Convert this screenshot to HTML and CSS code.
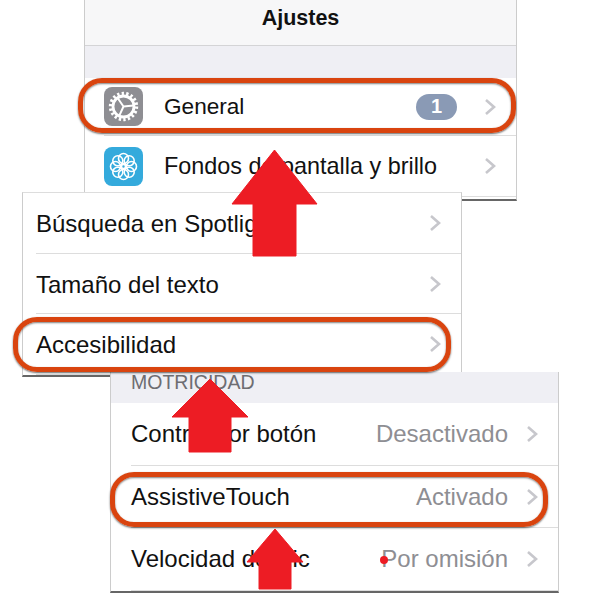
FILE: index.html
```html
<!DOCTYPE html>
<html lang="es">
<head>
    <meta charset="UTF-8">
    <title>Ajustes - AssistiveTouch</title>
    <link rel="stylesheet" href="styles.css">
</head>
<body>
    <div class="canvas">
        <!-- first screenshot -->
        <section class="panel panel-settings">
            <h1 class="navbar">Ajustes</h1>
            <div class="spacer"></div>
            <div class="row row-general">
                <svg class="app-icon icon-general" viewBox="0 0 39 39">
                    <circle class="teeth" cx="19.5" cy="19.5" r="13"/>
                    <circle class="ring" cx="19.5" cy="19.5" r="10.5"/>
                    <path class="spokes" d="M19.500 19.500L29.500 18.600M19.500 19.500L13.800 11.300M19.500 19.500L15.300 28.600"/>
                </svg>
                <span class="label label-general">General</span>
                <span class="badge">1</span>
                <svg class="chevron" viewBox="0 0 12 18"><path d="M2 2l8 7-8 7"/></svg>
            </div>
            <div class="row row-wallpaper">
                <svg class="app-icon icon-wallpaper" viewBox="0 0 39 39">
                    <g class="petals">
                        <circle cx="19.5" cy="11.5" r="5"/>
                        <circle cx="25.2" cy="13.8" r="5"/>
                        <circle cx="27.5" cy="19.5" r="5"/>
                        <circle cx="25.2" cy="25.2" r="5"/>
                        <circle cx="19.5" cy="27.5" r="5"/>
                        <circle cx="13.8" cy="25.2" r="5"/>
                        <circle cx="11.5" cy="19.5" r="5"/>
                        <circle cx="13.8" cy="13.8" r="5"/>
                        <circle cx="19.5" cy="19.500" r="2"/>
                    </g>
                </svg>
                <span class="label">Fondos de pantalla y brillo</span>
                <svg class="chevron" viewBox="0 0 12 18"><path d="M2 2l8 7-8 7"/></svg>
            </div>
        </section>

        <!-- second screenshot -->
        <section class="panel panel-general">
            <div class="row">
                <span class="label">Búsqueda en Spotlight</span>
                <svg class="chevron" viewBox="0 0 12 18"><path d="M2 2l8 7-8 7"/></svg>
            </div>
            <div class="row">
                <span class="label">Tamaño del texto</span>
                <svg class="chevron" viewBox="0 0 12 18"><path d="M2 2l8 7-8 7"/></svg>
            </div>
            <div class="row">
                <span class="label">Accesibilidad</span>
                <svg class="chevron" viewBox="0 0 12 18"><path d="M2 2l8 7-8 7"/></svg>
            </div>
        </section>

        <!-- third screenshot -->
        <section class="panel panel-access">
            <h2 class="group-title">MOTRICIDAD</h2>
            <div class="row">
                <span class="label">Control por botón</span>
                <span class="value">Desactivado</span>
                <svg class="chevron" viewBox="0 0 12 18"><path d="M2 2l8 7-8 7"/></svg>
            </div>
            <div class="row">
                <span class="label">AssistiveTouch</span>
                <span class="value">Activado</span>
                <svg class="chevron" viewBox="0 0 12 18"><path d="M2 2l8 7-8 7"/></svg>
            </div>
            <div class="row">
                <span class="label">Velocidad de clic</span>
                <span class="value">Por omisión</span>
                <svg class="chevron" viewBox="0 0 12 18"><path d="M2 2l8 7-8 7"/></svg>
            </div>
        </section>

        <!-- annotations drawn on top -->
        <div class="oval oval-general"></div>
        <div class="oval oval-access"></div>
        <div class="oval oval-touch"></div>

        <svg class="arrow arrow-one" viewBox="0 0 87 108"><path d="M43.500 1L86 55H65V107H22V55H1Z"/></svg>
        <svg class="arrow arrow-two" viewBox="0 0 78 75"><path d="M39 1L77 39H60V74H18V39H1Z"/></svg>
        <svg class="arrow arrow-three" viewBox="0 0 58 62"><path d="M29 1L57 34H45V61H13V34H1Z"/></svg>
        <div class="dot"></div>
    </div>
</body>
</html>
```

FILE: styles.css
```css
body {
    margin: 0;
    background: #fff;
    font-family: "Liberation Sans", Arial, sans-serif;
    color: #111;
}
.canvas {
    position: relative;
    width: 600px;
    height: 600px;
    overflow: hidden;
}

/* panels */
.panel {
    position: absolute;
    display: flex;
    flex-direction: column;
    box-sizing: border-box;
    background: #fff;
    border-left: 1px solid #ccc;
    border-right: 1px solid #ccc;
    border-bottom: 2px solid #666;
}
.panel-settings {
    left: 84px;
    top: 0;
    width: 433px;
    height: 201px;
}
.panel-general {
    left: 22px;
    top: 192px;
    width: 440px;
    height: 185px;
    border-top: 1px solid #ddd;
}
.panel-access {
    left: 110px;
    top: 372px;
    width: 449px;
    height: 221px;
}
.navbar {
    margin: 0;
    height: 46px;
    box-sizing: border-box;
    border-bottom: 1px solid #d4d4d6;
    background: #f7f7f8;
    font-size: 21.5px;
    line-height: 36px;
    font-weight: bold;
    text-align: center;
}
.spacer {
    height: 32px;
    background: #efeff4;
}
.group-title {
    margin: 0;
    height: 31px;
    padding-left: 20px;
    background: #efeff4;
    color: #6d6d72;
    font-size: 19.5px;
    font-weight: normal;
    line-height: 20px;
}

/* rows */
.row {
    display: flex;
    flex: 1;
    align-items: center;
    margin-left: 13px;
    padding-right: 20px;
    border-bottom: 1px solid #ddd;
    font-size: 24px;
}
.panel-general .label {
    padding-top: 2px;
}
.panel-access .row {
    margin-left: 20px;
}
.panel-settings .row {
    margin-left: 19px;
    font-size: 23.4px;
}
.row-general {
    flex: none;
    height: 57px;
}
.row-wallpaper {
    flex: none;
    height: 60px;
}
.label {
    flex: 1;
    white-space: nowrap;
}
.panel-settings .label-general {
    font-size: 22.6px;
}
.value {
    margin-right: 18px;
    color: #8e8e93;
}
.chevron {
    flex: none;
    width: 12px;
    height: 18px;
}
.chevron path {
    fill: none;
    stroke: #c7c7cc;
    stroke-width: 2.6;
}
.app-icon {
    flex: none;
    width: 39px;
    height: 39px;
    margin-right: 21px;
    border-radius: 8px;
}
.icon-general {
    background: #8e8e93;
}
.icon-wallpaper {
    background: #34aadc;
}
.teeth {
    fill: none;
    stroke: #fff;
    stroke-width: 3.4;
    stroke-dasharray: 2.3 2.24;
}
.ring {
    fill: none;
    stroke: #fff;
    stroke-width: 2.8;
}
.spokes {
    fill: none;
    stroke: #fff;
    stroke-width: 2;
}
.petals circle {
    fill: none;
    stroke: #fff;
    stroke-width: 1.6;
}
.badge {
    width: 41px;
    height: 26px;
    margin-right: 27px;
    border-radius: 13px;
    background: #8a9ab5;
    color: #fff;
    font-size: 20px;
    font-weight: bold;
    line-height: 25px;
    text-align: center;
}

/* annotations */
.oval {
    position: absolute;
    width: 438px;
    height: 55px;
    box-sizing: border-box;
    border: 5px solid #d9440f;
    border-radius: 24px;
    box-shadow: 0 1px 2px rgba(0, 0, 0, 0.6), inset 0 1px 2px rgba(0, 0, 0, 0.5);
}
.oval-general {
    left: 78px;
    top: 78px;
}
.oval-access {
    left: 13px;
    top: 317px;
}
.oval-touch {
    left: 110px;
    top: 472px;
}
.arrow {
    position: absolute;
}
.arrow path {
    fill: #ed1c24;
    stroke: #ed1c24;
    stroke-linejoin: round;
}
.arrow-one {
    left: 231px;
    top: 149px;
    width: 87px;
    height: 108px;
}
.arrow-two {
    left: 171px;
    top: 378px;
    width: 78px;
    height: 75px;
}
.arrow-three {
    left: 246px;
    top: 528px;
    width: 58px;
    height: 62px;
}
.dot {
    position: absolute;
    left: 380px;
    top: 556px;
    width: 8px;
    height: 8px;
    border-radius: 50%;
    background: #ed1c24;
}
```
